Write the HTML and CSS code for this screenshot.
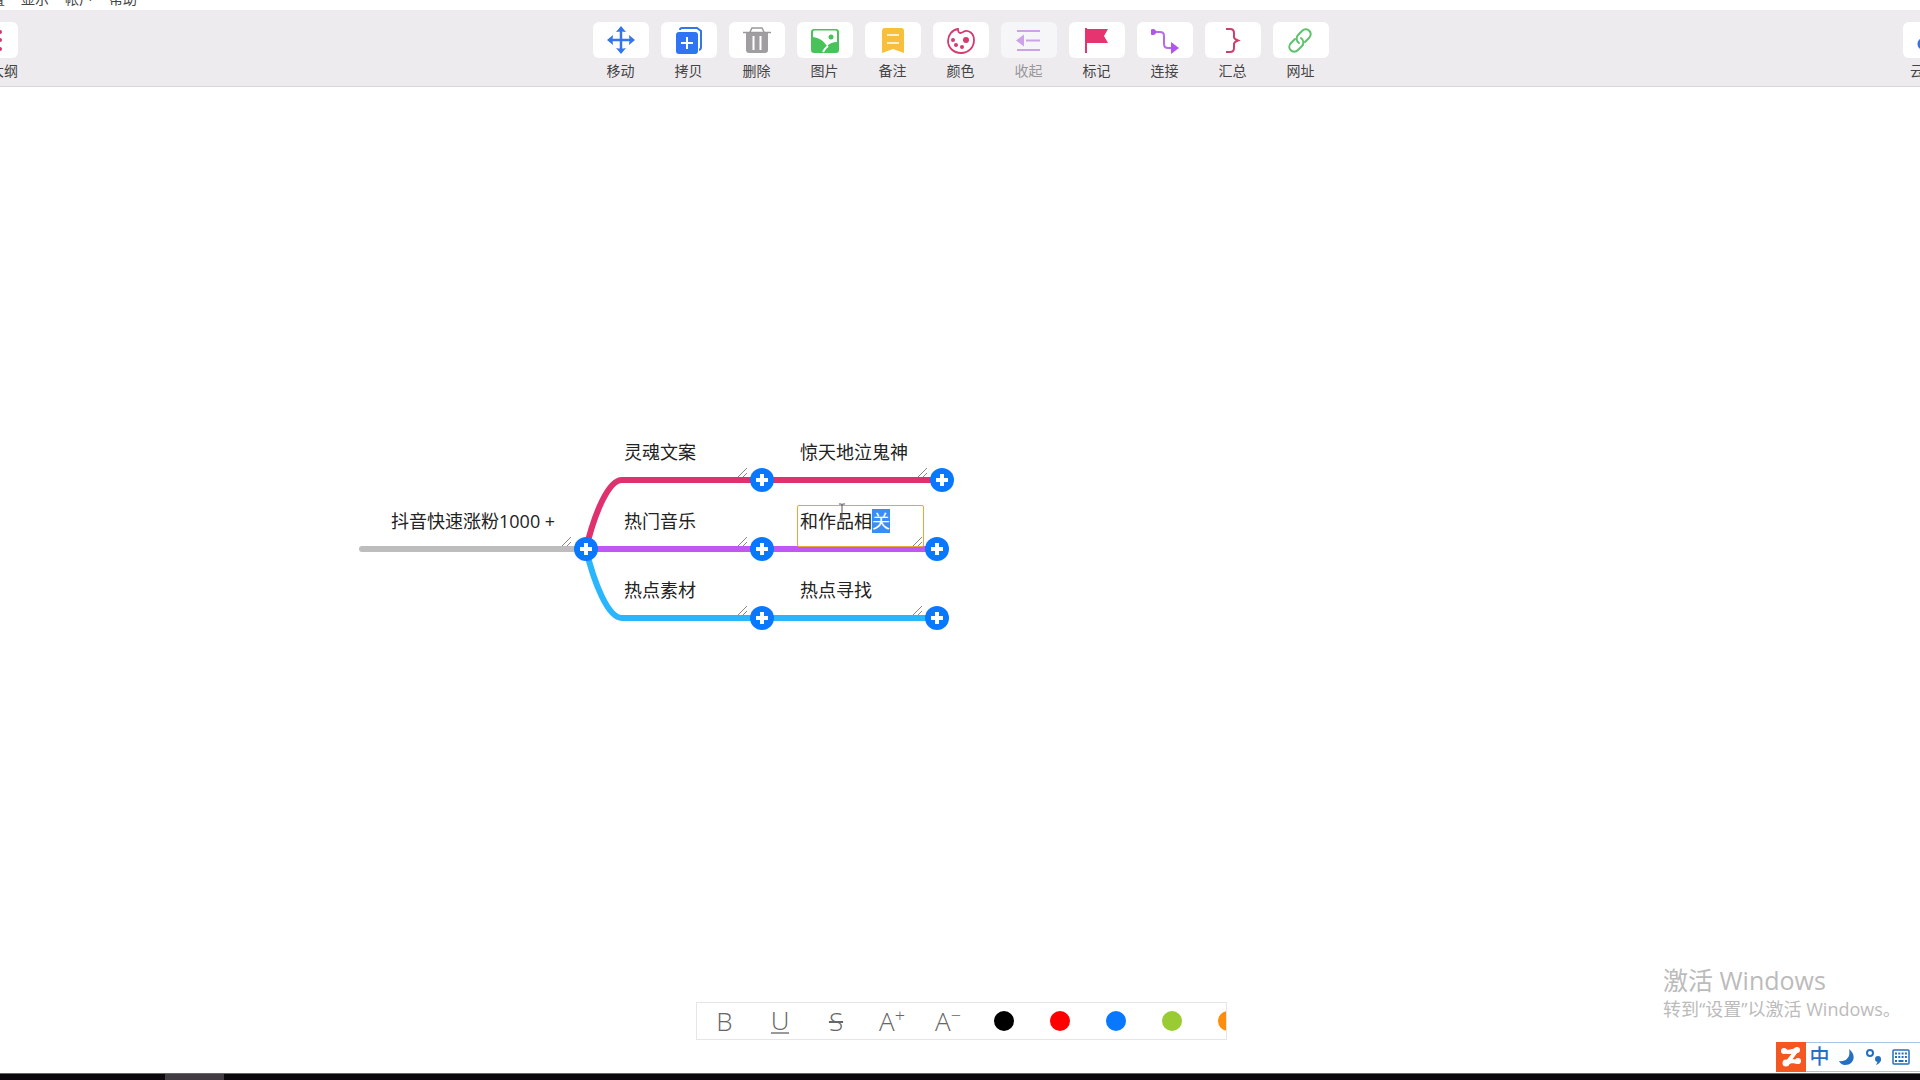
FILE: index.html
```html
<!DOCTYPE html>
<html lang="zh-CN">
<head>
<meta charset="utf-8">
<title>思维导图</title>
<link rel="stylesheet" href="styles.css">
</head>
<body>
<nav class="menubar">
  <button>设置</button><button>显示</button><button>帐户</button><button>帮助</button>
</nav>

<header class="toolbar">
  <button class="tool tool-start">
    <span class="tile"><svg viewBox="0 0 28 28" fill="none" stroke="#d6336c" stroke-width="2" stroke-linecap="round"><path d="M3 6h12M3 14h12M3 23h12"/><g fill="#d6336c" stroke="none"><circle cx="25" cy="6" r="2"/><circle cx="25" cy="14" r="2"/><circle cx="25" cy="23" r="2"/></g></svg></span>
    <span class="label">大纲</span>
  </button>

  <div class="tools">
    <button class="tool">
      <span class="tile"><svg viewBox="0 0 28 28" fill="#3575ea"><path d="M14 4v20M4 14h20" stroke="#3575ea" stroke-width="2.500"/><path d="M14 0l5 6q-5-1-10 0zM14 28l5-6q-5 1-10 0zM0 14l6-5q-1 5 0 10zM28 14l-6-5q1 5 0 10z"/></svg></span>
      <span class="label">移动</span>
    </button>
    <button class="tool">
      <span class="tile"><svg viewBox="0 0 28 28"><path d="M5 4q0-2 2-2h15l4 3v16q0 3-3 3" fill="none" stroke="#3575ea" stroke-width="2"/><rect x="0" y="5" width="24" height="23" rx="4" fill="#fff"/><rect x="1" y="6" width="22" height="22" rx="3" fill="#2f74f2"/><path d="M12 11v12M6 17h12" stroke="#fff" stroke-width="2"/></svg></span>
      <span class="label">拷贝</span>
    </button>
    <button class="tool">
      <span class="tile"><svg viewBox="0 0 28 28"><path d="M0 6.500h28M7 6l2-4h10l2 4" fill="none" stroke="#9c999d" stroke-width="1.500"/><path d="M3 7h22v17q0 3-3 3H6q-3 0-3-3z" fill="#a19ea2"/><path d="M10.500 10v14M17.500 10v14" stroke="#fff" stroke-width="2"/></svg></span>
      <span class="label">删除</span>
    </button>
    <button class="tool">
      <span class="tile"><svg viewBox="0 0 28 28"><rect x="0" y="3" width="28" height="24" rx="3" fill="#48c35a"/><path d="M2 6q0-1.500 1.500-1.500h21q1.500 0 1.500 1.500v10q-6 0-10 4Q11 12 2 11z" fill="#fff"/><path d="M12 26q2-4 5-6" fill="none" stroke="#fff" stroke-width="2"/><circle cx="20" cy="11" r="2.500" fill="#48c35a"/></svg></span>
      <span class="label">图片</span>
    </button>
    <button class="tool">
      <span class="tile"><svg viewBox="0 0 28 28"><path d="M3 5q0-3 3-3h16q3 0 3 3v22l-11-4-11 4z" fill="#f8bf3a"/><path d="M8 9h12M8 17h12" stroke="#fff" stroke-width="1.600"/></svg></span>
      <span class="label">备注</span>
    </button>
    <button class="tool">
      <span class="tile"><svg viewBox="0 0 28 28"><path d="M11 3c0 4 2 5 5 3 5-3 11 1 11 8s-5 13-13 13S1 21 1 15 5 4 11 3z" fill="none" stroke="#d63a6e" stroke-width="1.800"/><g fill="#d63a6e"><circle cx="6" cy="14" r="2"/><circle cx="19" cy="14" r="3"/><circle cx="9" cy="19" r="2"/><circle cx="15" cy="21" r="2"/></g></svg></span>
      <span class="label">颜色</span>
    </button>
    <button class="tool" disabled>
      <span class="tile"><svg viewBox="0 0 28 28"><path d="M2 5h23M11 14.500h14M2 24h23" stroke="#b05be0" stroke-width="2"/><path d="M1 14.500l8-6v12z" fill="#b05be0"/></svg></span>
      <span class="label">收起</span>
    </button>
    <button class="tool">
      <span class="tile"><svg viewBox="0 0 28 28"><path d="M2 2h2v1h21l-4 7 4 7H4v10H2z" fill="#e5346f"/></svg></span>
      <span class="label">标记</span>
    </button>
    <button class="tool">
      <span class="tile"><svg viewBox="0 0 28 28"><path d="M2 6h7q4 0 4 4v8q0 4 4 4h4" fill="none" stroke="#b66af0" stroke-width="2"/><circle cx="2" cy="6" r="3" fill="#b055f0"/><path d="M20 16l8 6-8 6z" fill="#b055f0"/></svg></span>
      <span class="label">连接</span>
    </button>
    <button class="tool">
      <span class="tile"><svg viewBox="0 0 28 28"><path d="M7 3h4q4 0 4 4v4q0 2 4 3.500-4 1.500-4 3.500v4q0 4-4 4H7" fill="none" stroke="#cf3f6b" stroke-width="2"/></svg></span>
      <span class="label">汇总</span>
    </button>
    <button class="tool">
      <span class="tile"><svg viewBox="0 0 28 28" fill="none" stroke="#5cc26c" stroke-width="2" stroke-linecap="round"><path d="M12 17c-3-2-3-6-1-8l4-4c5-5 12 2 7 7l-4 4"/><path d="M14 12c3 2 3 6 1 8l-4 4c-5 5-12-2-7-7l4-4"/></svg></span>
      <span class="label">网址</span>
    </button>
  </div>

  <button class="tool tool-end">
    <span class="tile"><svg viewBox="0 0 28 28" fill="#3d6fe0"><path d="M7 24a6 6 0 0 1-1-12 8 8 0 0 1 15-2 7 7 0 0 1 0 14z"/></svg></span>
    <span class="label">云</span>
  </button>
</header>

<main class="canvas">
  <svg class="branches" fill="none" stroke-width="6">
    <path d="M362 462H586" stroke="#bdbdbd" stroke-linecap="round"/>
    <path d="M586 462C594 428 608 393 622 393H942" stroke="#e0306e"/>
    <path d="M586 462C594 496 608 531 622 531H937" stroke="#29b6fd"/>
    <path d="M586 462H937" stroke="#bf58f2"/>
  </svg>

  <div class="node root"><textarea rows="1" aria-label="中心主题">抖音快速涨粉1000 +</textarea><svg class="grip" viewBox="0 0 12 12"><path d="M1 11L10 2M6 11l4-4"/></svg><button class="add" aria-label="添加"></button></div>
  <div class="node level1 row1"><textarea rows="1" aria-label="主题">灵魂文案</textarea><svg class="grip" viewBox="0 0 12 12"><path d="M1 11L10 2M6 11l4-4"/></svg><button class="add" aria-label="添加"></button></div>
  <div class="node level1 row2"><textarea rows="1" aria-label="主题">热门音乐</textarea><svg class="grip" viewBox="0 0 12 12"><path d="M1 11L10 2M6 11l4-4"/></svg><button class="add" aria-label="添加"></button></div>
  <div class="node level1 row3"><textarea rows="1" aria-label="主题">热点素材</textarea><svg class="grip" viewBox="0 0 12 12"><path d="M1 11L10 2M6 11l4-4"/></svg><button class="add" aria-label="添加"></button></div>
  <div class="node level2 row1 wide"><textarea rows="1" aria-label="主题">惊天地泣鬼神</textarea><svg class="grip" viewBox="0 0 12 12"><path d="M1 11L10 2M6 11l4-4"/></svg><button class="add" aria-label="添加"></button></div>
  <div class="node level2 row2 editing"><textarea rows="1" id="editing" aria-label="主题">和作品相关</textarea><svg class="grip" viewBox="0 0 12 12"><path d="M1 11L10 2M6 11l4-4"/></svg><button class="add" aria-label="添加"></button></div>
  <div class="node level2 row3"><textarea rows="1" aria-label="主题">热点寻找</textarea><svg class="grip" viewBox="0 0 12 12"><path d="M1 11L10 2M6 11l4-4"/></svg><button class="add" aria-label="添加"></button></div>

  <svg class="ibeam" viewBox="0 0 8 18"><path d="M1 1h2.500l.5.500.500-.500H7M4 1v16M1 17h6" fill="none" stroke="#555"/></svg>

  <div class="format">
    <button>B</button>
    <button><span class="under">U</span></button>
    <button><s>S</s></button>
    <button>A<sup>+</sup></button>
    <button>A<sup>−</sup></button>
    <button aria-label="黑色"><i class="dot black"></i></button>
    <button aria-label="红色"><i class="dot red"></i></button>
    <button aria-label="蓝色"><i class="dot blue"></i></button>
    <button aria-label="绿色"><i class="dot green"></i></button>
    <button aria-label="橙色"><i class="dot orange"></i></button>
  </div>

  <div class="watermark">
    <p class="wm-title">激活 Windows</p>
    <p class="wm-text">转到“设置”以激活 Windows。</p>
  </div>

  <div class="ime">
    <svg class="ime-logo" viewBox="0 0 30 30"><rect width="30" height="30" fill="#f4571f"/><path d="M8 9l4 1 9-2-10 13 5-2 6 1" fill="none" stroke="#fff" stroke-width="4" stroke-linejoin="round" stroke-linecap="round"/><g fill="#fff"><circle cx="8" cy="9" r="3"/><circle cx="21" cy="8" r="3"/><circle cx="10" cy="21" r="3.500"/><circle cx="22" cy="19" r="3"/></g></svg>
    <div class="ime-bar">
      <button>中</button>
      <button aria-label="半角"><svg viewBox="0 0 18 18"><path d="M11 1c8 6 5 16-4 16q-4 0-6-4c7 1 12-4 10-12z" fill="#256fc2"/></svg></button>
      <button aria-label="标点"><svg viewBox="0 0 18 18"><circle cx="5" cy="5" r="3" fill="none" stroke="#256fc2" stroke-width="2"/><circle cx="13" cy="11" r="3" fill="#256fc2"/><path d="M16 11q0 4-5 6l2-4z" fill="#256fc2"/></svg></button>
      <button aria-label="软键盘"><svg viewBox="0 0 18 18" fill="none" stroke="#256fc2"><rect x="1" y="2" width="16" height="14" rx="1" stroke-width="1.500"/><path d="M3 5.500h12M3 9h12" stroke-width="2" stroke-dasharray="2 1.300"/><path d="M3 13h2M6.500 13h5M13 13h2" stroke-width="2"/></svg></button>
    </div>
  </div>
</main>

<footer class="taskbar"><span class="task-active"></span></footer>
<script src="app.js"></script>
</body>
</html>
```
FILE: styles.css
```css
* { box-sizing: border-box; }

body {
  margin: 0;
  height: 100vh;
  display: flex;
  flex-direction: column;
  overflow: hidden;
  background: #fff;
  color: #222;
  font-family: "Open Sans", "Noto Sans CJK SC", sans-serif;
}

button {
  margin: 0;
  padding: 0;
  border: 0;
  background: none;
  color: inherit;
  font: inherit;
}

svg { display: block; }

.menubar {
  height: 10px;
  flex: none;
  display: flex;
  align-items: flex-end;
  gap: 16px;
  margin-left: -23px;
  padding-bottom: 2px;
  overflow: hidden;
  font-size: 14px;
  line-height: 18px;
  color: #444;
}

.toolbar {
  flex: none;
  display: flex;
  justify-content: space-between;
  margin: 0 -39px 0 -38px;
  padding: 12px 0 5px;
  background: #eeebef;
  border-bottom: 1px solid #dcd6da;
}

.tools { display: flex; gap: 12px; }

.tool {
  width: 56px;
  display: flex;
  flex-direction: column;
  gap: 2px;
  font-size: 14px;
  line-height: 21px;
  color: #444;
}

.tool:disabled { opacity: .5; }

.tile {
  width: 56px;
  height: 36px;
  display: grid;
  place-items: center;
  background: #fff;
  border-radius: 6px;
}

.tile svg { width: 28px; height: 28px; }
.tool-start .tile { justify-items: end; padding-right: 15px; }
.label { width: 100%; text-align: center; }
.tool-start .label { text-align: right; }
.tool-end .label { text-align: left; padding-left: 7px; }

.canvas {
  position: relative;
  flex: 1;
  min-height: 0;
  overflow: hidden;
}

.branches {
  position: absolute;
  inset: 0;
  width: 100%;
  height: 100%;
}

.node { position: absolute; width: 128px; height: 42px; }
.root { left: 388px; top: 418px; width: 185px; }
.level1 { left: 621px; }
.level2 { left: 797px; width: 127px; }
.row1 { top: 349px; }
.row2 { top: 418px; }
.row3 { top: 487px; }
.wide { width: 132px; }

.node textarea {
  display: block;
  width: 100%;
  height: 100%;
  margin: 0;
  padding: 3px 2px;
  border: 1px solid transparent;
  border-radius: 2px;
  outline: 0;
  resize: none;
  overflow: hidden;
  background: none;
  color: #222;
  font: inherit;
  font-size: 18px;
  line-height: 24px;
}

.editing textarea { background: #fff; border-color: #e8a63c; }
.node textarea::selection { background: #3b8df5; color: #fff; }

.grip {
  position: absolute;
  right: 0;
  bottom: 0;
  width: 12px;
  height: 12px;
  fill: none;
  stroke: #888;
}

.add {
  position: absolute;
  right: -25px;
  bottom: -14px;
  width: 24px;
  height: 24px;
  border-radius: 50%;
  background:
    linear-gradient(#fff, #fff) center / 12px 4px no-repeat,
    linear-gradient(#fff, #fff) center / 4px 12px no-repeat,
    #0879ff;
}

.ibeam {
  position: absolute;
  left: 838px;
  top: 416px;
  width: 8px;
  height: 18px;
}

.format {
  position: absolute;
  left: calc(50% - 264px);
  bottom: 33px;
  width: 531px;
  height: 38px;
  display: flex;
  overflow: hidden;
  background: #fff;
  border: 1px solid #e6e6e6;
  color: #666;
  font-size: 26px;
  font-weight: 300;
  line-height: 36px;
}

.format button {
  flex: 0 0 56px;
  display: flex;
  justify-content: center;
  align-items: center;
}

.format button:first-child { flex-basis: 55px; }
.format sup { font-size: 18px; line-height: 24px; align-self: flex-start; }
.under { line-height: 24px; border-bottom: 2px solid #999; }
.format s { text-decoration-thickness: 2px; }

.dot { width: 20px; height: 20px; border-radius: 50%; }
.black { background: #000; }
.red { background: #f00; }
.blue { background: #0879ff; }
.green { background: #9c3; }
.orange { background: #ff8c0a; }

.watermark {
  position: absolute;
  right: 28px;
  bottom: 51px;
  width: 229px;
  color: #bbb;
  white-space: nowrap;
}

.watermark p { margin: 0; }
.wm-title { font-size: 25px; line-height: 31px; }
.wm-text { font-size: 18px; line-height: 26px; }

.ime {
  position: absolute;
  right: 0;
  bottom: 1px;
  display: flex;
}

.ime-logo { width: 30px; height: 30px; }

.ime-bar {
  width: 114px;
  display: flex;
  align-items: center;
  background: #fff;
  border: 1px solid #a9c4ea;
  border-width: 1px 0;
  color: #256fc2;
  font-size: 20px;
  font-weight: 500;
  line-height: 26px;
}

.ime-bar button { flex: 0 0 27px; display: grid; place-items: center; }
.ime-bar svg { width: 18px; height: 18px; }

.taskbar {
  flex: none;
  height: 7px;
  padding-left: 165px;
  background: #0a080b;
  border-top: 1px solid #666;
}

.task-active { display: block; width: 59px; height: 6px; background: #413c41; }
```
FILE: app.js
```js
const editing = document.getElementById("editing");
editing.focus();
editing.setSelectionRange(4, 5);
```
